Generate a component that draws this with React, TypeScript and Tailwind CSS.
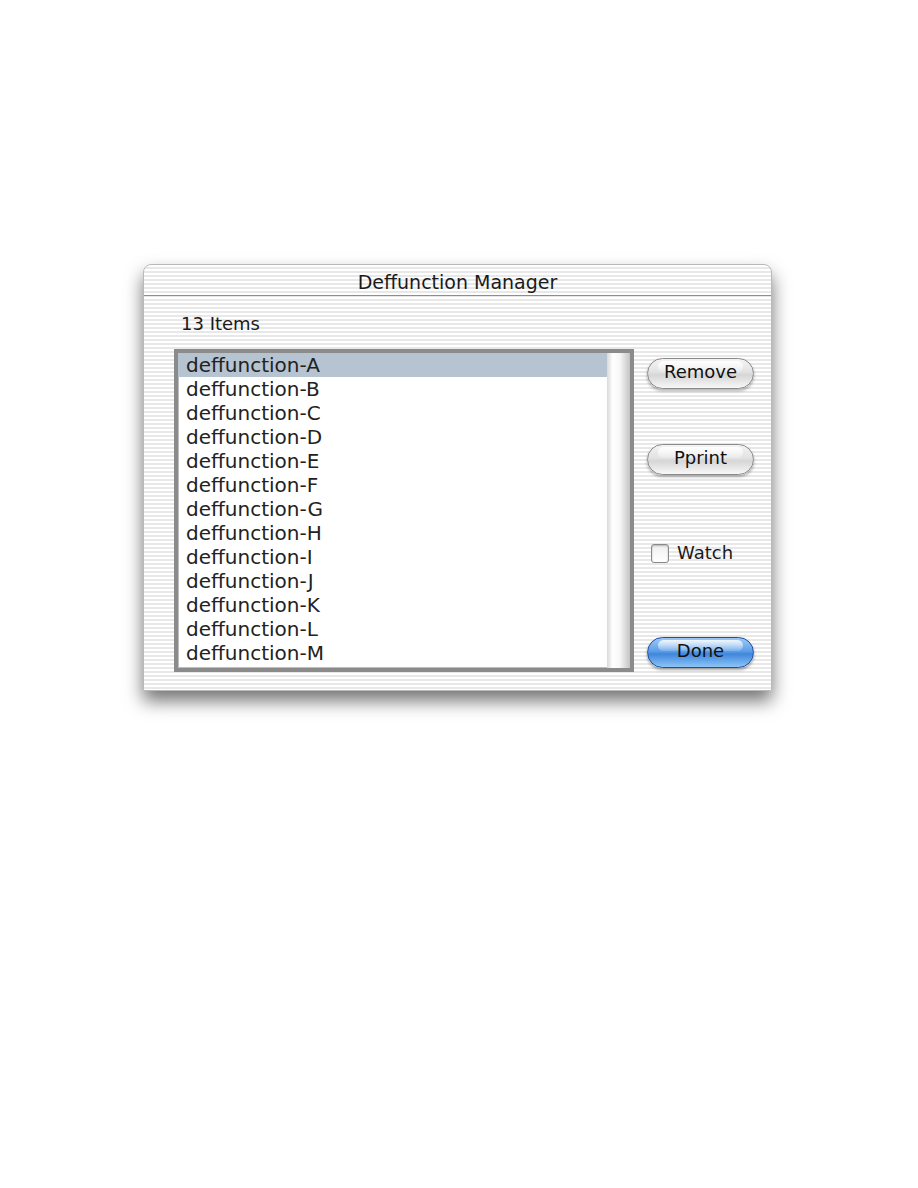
import React from "react";

const items = [
    "deffunction-A",
    "deffunction-B",
    "deffunction-C",
    "deffunction-D",
    "deffunction-E",
    "deffunction-F",
    "deffunction-G",
    "deffunction-H",
    "deffunction-I",
    "deffunction-J",
    "deffunction-K",
    "deffunction-L",
    "deffunction-M",
];

const font = { fontFamily: '"DejaVu Sans", "Liberation Sans", sans-serif' };

interface AquaButtonProps {
    label: string;
    primary?: boolean;
    className?: string;
}

const AquaButton: React.FC<AquaButtonProps> = ({ label, primary, className }) => {
    if (primary) {
        return (
            <button
                className={`relative h-[31px] w-[107px] rounded-full border border-[#1d4f9c] bg-[linear-gradient(180deg,#9cc9f5_0%,#5e9fe8_45%,#3f86dc_55%,#8cc4f6_100%)] pb-[3px] text-[18px] leading-none text-[#111] shadow-[0_2px_3px_rgba(0,0,0,0.35)] ${className ?? ""}`}
            >
                <span className="absolute left-[10px] right-[10px] top-[2px] h-[11px] rounded-full bg-[linear-gradient(180deg,rgba(255,255,255,0.85),rgba(255,255,255,0.15))]" />
                <span className="relative">{label}</span>
            </button>
        );
    }
    return (
        <button
            className={`relative h-[31px] w-[107px] rounded-full border border-[#8a8a8a] bg-[linear-gradient(180deg,#f4f4f4_0%,#e2e2e2_45%,#d6d6d6_55%,#f7f7f7_100%)] pb-[3px] text-[18px] leading-none text-[#111] shadow-[0_2px_3px_rgba(0,0,0,0.3)] ${className ?? ""}`}
        >
            <span className="absolute left-[10px] right-[10px] top-[2px] h-[11px] rounded-full bg-[linear-gradient(180deg,rgba(255,255,255,0.95),rgba(255,255,255,0.2))]" />
            <span className="relative">{label}</span>
        </button>
    );
};

const App: React.FC = () => {
    return (
        <div className="min-h-[1188px] w-full bg-white pt-[264px] pl-[143px]" style={font}>
            <div className="flex w-[629px] flex-col rounded-t-[8px] border border-[#b9b9b9] bg-[repeating-linear-gradient(180deg,#ffffff_0px,#ffffff_2px,#e8e8e8_2px,#e8e8e8_4px)] shadow-[0_10px_18px_rgba(0,0,0,0.55)]">
                <div className="flex h-[31px] items-center justify-center border-b border-[#8e8e8e] pt-[4px] text-[19px] text-[#1a1a1a]">
                    Deffunction Manager
                </div>
                <div className="pl-[37px] pt-[16px] text-[18px] leading-[24px] text-[#1a1a1a]">
                    13 Items
                </div>
                <div className="mt-[13px] flex pb-[18px] pl-[30px]">
                    <div className="flex h-[323px] w-[460px] border-[4px] border-[#8b8b8b] bg-white shadow-[inset_0_0_0_1px_#bdbdbd]">
                        <div className="flex w-[429px] flex-col">
                            {items.map((item, i) => (
                                <div
                                    key={item}
                                    className={`h-[24px] pl-[8px] text-[20px] leading-[24px] text-[#222] ${i === 0 ? "bg-[#b6c3d0]" : ""}`}
                                >
                                    {item}
                                </div>
                            ))}
                        </div>
                        <div className="w-[23px] bg-[linear-gradient(90deg,#d9d9d9_0%,#ffffff_25%,#f7f7f7_55%,#c4c4c4_100%)]" />
                    </div>
                    <div className="ml-[13px] flex flex-col">
                        <AquaButton label="Remove" className="mt-[9px]" />
                        <AquaButton label="Pprint" className="mt-[55px]" />
                        <div className="mt-[66px] flex items-center gap-[8px] pl-[4px]">
                            <div className="h-[19px] w-[18px] rounded-[3px] border border-[#8a8a8a] bg-[linear-gradient(180deg,#f0f0f0,#ffffff)] shadow-[inset_0_1px_2px_rgba(0,0,0,0.25)]" />
                            <span className="text-[18px] leading-[24px] text-[#1a1a1a]">Watch</span>
                        </div>
                        <AquaButton label="Done" primary className="mt-[72px]" />
                    </div>
                </div>
            </div>
        </div>
    );
};

export default App;
